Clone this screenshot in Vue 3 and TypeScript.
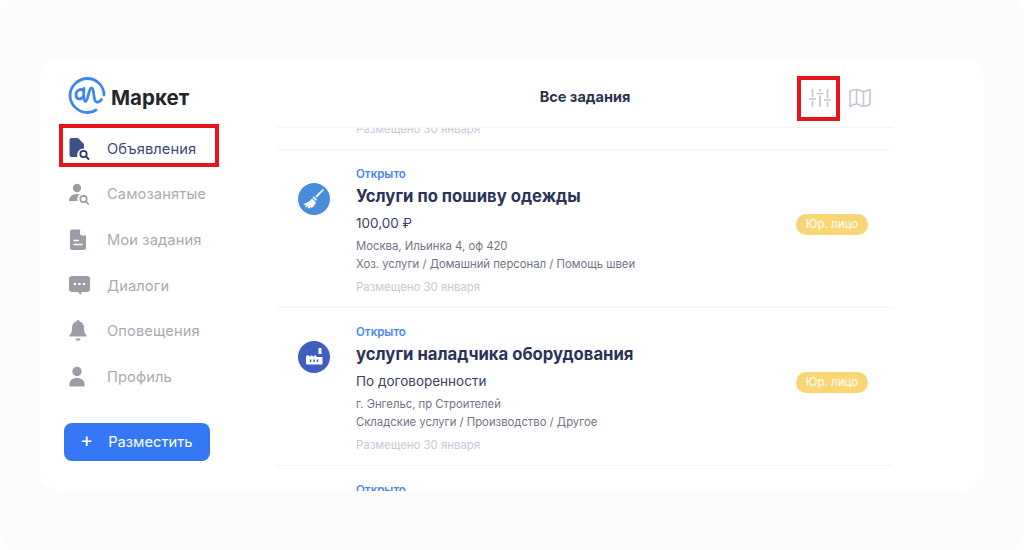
<script setup lang="ts">
interface Task {
  title: string;
  price: string;
  address: string;
  category: string;
  kind: 'broom' | 'factory';
}

const navItems = [
  { label: 'Объявления', icon: 'ads', active: true },
  { label: 'Самозанятые', icon: 'people', active: false },
  { label: 'Мои задания', icon: 'doc', active: false },
  { label: 'Диалоги', icon: 'chat', active: false },
  { label: 'Оповещения', icon: 'bell', active: false },
  { label: 'Профиль', icon: 'user', active: false },
];

const tasks: Task[] = [
  {
    title: 'Услуги по пошиву одежды',
    price: '100,00 ₽',
    address: 'Москва, Ильинка 4, оф 420',
    category: 'Хоз. услуги / Домашний персонал / Помощь швеи',
    kind: 'broom',
  },
  {
    title: 'услуги наладчика оборудования',
    price: 'По договоренности',
    address: 'г. Энгельс, пр Строителей',
    category: 'Складские услуги / Производство / Другое',
    kind: 'factory',
  },
];
</script>

<template>
  <div class="frame">
    <div class="card">
      <aside class="sidebar">
        <div class="logo">
          <svg width="38" height="37" viewBox="0 0 38 37" fill="none" stroke="#3b86f2" stroke-width="2.800" stroke-linecap="round" stroke-linejoin="round">
            <path d="M28 33C25.500 34.800 22.500 35.500 19.500 35.500 10 35.500 2 27.500 2 18.500S10 1.500 19.500 1.500c9 0 16.500 7.500 16.500 16.500" />
            <path d="M15.500 13.500c-3-2.500-7.500 0-7.500 4.500 0 4.500 5 5.500 7.500 1" />
            <path d="M16 11.500c-.5 4-.5 12.500 1.500 13 2.500.5 3-13.500 6-13.500 3.500 0 1 13.500 5 14 2 .2 4-1 5-2.500" />
          </svg>
          <span class="logo-text">Маркет</span>
        </div>

        <nav class="nav">
          <div v-for="item in navItems" :key="item.label" class="nav-item" :class="{ active: item.active }">
            <span class="nav-icon">
              <svg v-if="item.icon === 'ads'" width="22" height="24" viewBox="0 0 22 24">
                <path d="M3.500 1h6.500l6 6v4.500a6.500 6.500 0 0 0-6.500 8.500H3.500a2 2 0 0 1-2-2V3a2 2 0 0 1 2-2z" fill="#3f4f87" />
                <circle cx="15.500" cy="17" r="3.200" fill="none" stroke="#2e3a66" stroke-width="1.800" />
                <path d="M18 19.500l2.500 2.500" stroke="#2e3a66" stroke-width="1.800" stroke-linecap="round" />
              </svg>
              <svg v-else-if="item.icon === 'people'" width="22" height="24" viewBox="0 0 22 24">
                <circle cx="9" cy="6" r="4.200" fill="#9c9ca6" />
                <path d="M1 19c0-4 3-7 8-7 1 0 2 .1 2.800.4A6 6 0 0 0 9.500 19z" fill="#9c9ca6" />
                <circle cx="15.500" cy="17" r="3.200" fill="none" stroke="#9c9ca6" stroke-width="1.700" />
                <path d="M18 19.500l2.300 2.300" stroke="#9c9ca6" stroke-width="1.700" stroke-linecap="round" />
              </svg>
              <svg v-else-if="item.icon === 'doc'" width="22" height="24" viewBox="0 0 22 24">
                <path d="M4 1.500h8l6 6V20a2 2 0 0 1-2 2H4a2 2 0 0 1-2-2V3.500a2 2 0 0 1 2-2z" fill="#9c9ca6" />
                <path d="M12 1.500v4a2 2 0 0 0 2 2h4z" fill="#fff" />
                <path d="M5.500 12.500h5.500M5.500 16.500h9" stroke="#fff" stroke-width="1.600" />
              </svg>
              <svg v-else-if="item.icon === 'chat'" width="22" height="24" viewBox="0 0 22 24">
                <path d="M4 2h15a3 3 0 0 1 3 3v10a3 3 0 0 1-3 3h-5l-1.500 3-2.500-3H4a3 3 0 0 1-3-3V5a3 3 0 0 1 3-3z" fill="#9c9ca6" />
                <circle cx="7" cy="10" r="1.300" fill="#fff" />
                <circle cx="11.500" cy="10" r="1.300" fill="#fff" />
                <circle cx="16" cy="10" r="1.300" fill="#fff" />
              </svg>
              <svg v-else-if="item.icon === 'bell'" width="22" height="24" viewBox="0 0 22 24">
                <path d="M10 1a1.500 1.500 0 0 1 1.500 1.600c3 .7 4.500 3.200 4.500 6.400 0 4 .7 5.500 2.500 7.200v1.300H1.500v-1.300C3.300 14.500 4 13 4 9c0-3.200 1.500-5.700 4.500-6.400A1.500 1.500 0 0 1 10 1z" fill="#9c9ca6" />
                <path d="M7.500 19.500h5a2.500 2.200 0 0 1-5 0z" fill="#9c9ca6" />
              </svg>
              <svg v-else width="22" height="24" viewBox="0 0 22 24">
                <circle cx="9" cy="6.500" r="4.700" fill="#9c9ca6" />
                <path d="M1.500 21.500v-2.500c0-3.500 3-6 7.500-6s7.500 2.500 7.500 6v2.500z" fill="#9c9ca6" />
              </svg>
            </span>
            <span class="nav-label">{{ item.label }}</span>
          </div>
        </nav>

        <button class="post-btn">
          <span class="plus">+</span>
          <span>Разместить</span>
        </button>
      </aside>

      <main class="main">
        <header class="top">
          <h1 class="top-title">Все задания</h1>
          <div class="top-actions">
            <svg width="22" height="18" viewBox="0 0 22 18" fill="none" stroke="#c2c5d3" stroke-width="1.700">
              <path d="M3.500 0v8M3.500 12v6M11 0v2.500M11 6.500V18M18.500 0v9M18.500 13v5" />
              <path d="M0 10h7M7.500 4.500h7M15 11h7" />
            </svg>
            <svg width="22" height="20" viewBox="0 0 22 20" fill="none" stroke="#c2c5d3" stroke-width="1.600" stroke-linejoin="round">
              <path d="M1 3.500C3 2 5.500 1.500 7.500 1.500c2.500 0 4.500 2 7 2 2 0 4.500-1 6.500-2v14.500c-2 1.300-4.500 2.500-6.500 2.500-2.500 0-4.500-2.500-7-2.500-2 0-4.500 1-6.500 2.500z" />
              <path d="M7.500 1.500V16M14.500 3.500v15" />
            </svg>
          </div>
        </header>

        <div class="list">
          <div class="prev-tail">Размещено 30 января</div>
          <article v-for="task in tasks" :key="task.title" class="task">
            <div class="task-icon" :class="task.kind">
              <svg v-if="task.kind === 'broom'" width="22" height="22" viewBox="0 0 22 22" fill="#fff">
                <path d="M20 1l1 1-7 7.500-1.500-1.500z" />
                <path d="M11 8.500l3 3-1 1.500-3.500-3.500z" />
                <path d="M9 10.500l4 4c-1 2.500-3 5-5.500 6l.5-2-2 2-1.500-.5 1-2.500-2.500 2-1-1 1.500-2-2.500.5-.5-1c3-.5 6-2.500 8.500-5.500z" />
              </svg>
              <svg v-else width="20" height="20" viewBox="0 0 20 20">
                <path d="M14.500 1h3v6h-3z" fill="#fff" />
                <path d="M2 10c0-1 .5-1.500 1-1.500h2l1.500 1.500V8.500h1.500l2 1.500V8.500h1.500L13 10h5.500v6.500a1 1 0 0 1-1 1H3a1 1 0 0 1-1-1z" fill="#fff" />
                <path d="M6.500 12.500v2.500M10 12.500v2.500M13.500 12.500v2.500" stroke="#3f5fc0" stroke-width="1.500" />
              </svg>
            </div>
            <div class="task-body">
              <div class="status">Открыто</div>
              <h2 class="task-title">{{ task.title }}</h2>
              <div class="price">{{ task.price }}</div>
              <div class="meta">{{ task.address }}</div>
              <div class="meta">{{ task.category }}</div>
              <div class="posted">Размещено 30 января</div>
            </div>
            <span class="badge">Юр. лицо</span>
          </article>
          <div class="status next">Открыто</div>
        </div>
      </main>

      <div class="mark mark-nav"></div>
      <div class="mark mark-filter"></div>
    </div>
  </div>
</template>

<style>
html, body {
  margin: 0;
  background: #fff;
}
</style>

<style scoped>
.frame {
  width: 1024px;
  height: 550px;
  box-sizing: border-box;
  padding: 58px 40px 59px;
  background: #fcfcfc;
  border-radius: 16px;
  font-family: "Inter", "Noto Sans", sans-serif;
  overflow: hidden;
}

.card {
  position: relative;
  display: flex;
  height: 433px;
  background: #fff;
  border-radius: 22px;
  overflow: hidden;
}

.sidebar {
  width: 237px;
  flex-shrink: 0;
  box-sizing: border-box;
  padding: 19px 0 0 28px;
}

.logo {
  display: flex;
  align-items: center;
  gap: 5px;
  height: 37px;
}

.logo-text {
  font-size: 20.500px;
  font-weight: 700;
  color: #24272e;
  margin-top: 3px;
}

.nav {
  margin-top: 12px;
}

.nav-item {
  display: flex;
  align-items: center;
  height: 45.6px;
  color: #aaaab2;
}

.nav-item.active {
  color: #3f4a78;
}

.nav-icon {
  display: flex;
  width: 39px;
  flex-shrink: 0;
}

.nav-label {
  font-size: 14.700px;
  letter-spacing: 0.1px;
}

.post-btn {
  display: flex;
  align-items: center;
  gap: 15px;
  width: 146px;
  height: 38px;
  margin: 23px 0 0 -4px;
  padding: 0 0 0 16px;
  border: none;
  border-radius: 8px;
  background: #3478f6;
  color: #fff;
  font-family: inherit;
  font-size: 14.700px;
}

.plus {
  font-size: 20px;
  line-height: 20px;
  margin-top: -4px;
}

.main {
  width: 616px;
  flex-shrink: 0;
  display: flex;
  flex-direction: column;
}

.top {
  position: relative;
  display: flex;
  align-items: center;
  justify-content: center;
  height: 70px;
  flex-shrink: 0;
  border-bottom: 1px solid #f4f4f6;
  box-sizing: border-box;
  padding-top: 8px;
}

.top-title {
  margin: 0;
  font-size: 14.500px;
  font-weight: 700;
  color: #2b3350;
}

.top-actions {
  position: absolute;
  right: 22px;
  top: 30px;
  display: flex;
  align-items: center;
  gap: 18px;
}

.list {
  flex: 1;
  overflow: hidden;
}

.prev-tail {
  margin-top: -5px;
  height: 26px;
  font-size: 11.400px;
  line-height: 12px;
  color: #c6c9d6;
  padding-left: 79px;
  border-bottom: 1px solid #f4f4f6;
}

.task {
  display: flex;
  align-items: flex-start;
  height: 158px;
  box-sizing: border-box;
  padding: 0 25px 0 21px;
  border-bottom: 1px solid #f4f4f6;
}

.task-icon {
  display: flex;
  align-items: center;
  justify-content: center;
  width: 32px;
  height: 32px;
  border-radius: 50%;
  flex-shrink: 0;
  margin: 33px 26px 0 0;
}

.task-icon.broom {
  background: #4a8cdc;
}

.task-icon.factory {
  background: #3f5fc0;
}

.task-body {
  flex: 1;
  min-width: 0;
  padding-top: 17px;
}

.status {
  font-size: 11.500px;
  line-height: 14px;
  font-weight: 600;
  color: #4a86f0;
}

.status.next {
  padding: 17px 0 0 79px;
}

.task-title {
  margin: 3px 0 0;
  font-size: 16.700px;
  line-height: 24px;
  font-weight: 700;
  color: #2b3358;
}

.price {
  margin-top: 5px;
  font-size: 13.500px;
  line-height: 20px;
  color: #3a4266;
}

.meta {
  font-size: 11.300px;
  line-height: 18px;
  color: #6f7488;
}

.price + .meta {
  margin-top: 4px;
}

.posted {
  margin-top: 5px;
  font-size: 11.400px;
  line-height: 18px;
  color: #c6c9d6;
}

.badge {
  width: 72px;
  height: 21px;
  border-radius: 11px;
  background: #f8d674;
  color: #fff;
  font-size: 11.500px;
  line-height: 21px;
  text-align: center;
  margin-top: 64px;
  flex-shrink: 0;
}

.mark {
  position: absolute;
  box-sizing: border-box;
  border: 4px solid #e8141c;
}

.mark-nav {
  left: 19px;
  top: 66px;
  width: 160px;
  height: 43px;
}

.mark-filter {
  left: 757px;
  top: 18px;
  width: 43px;
  height: 45px;
}
</style>
